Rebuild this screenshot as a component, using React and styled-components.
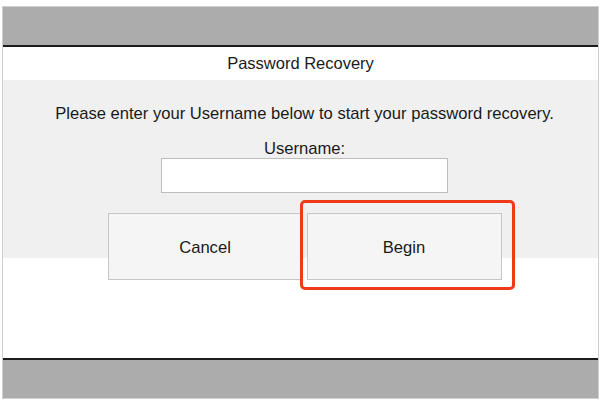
import React from "react";
import styled, { createGlobalStyle } from "styled-components";

const GlobalStyle = createGlobalStyle`
  html, body {
    margin: 0;
    padding: 0;
    background: #ffffff;
    font-family: "Liberation Sans", Arial, sans-serif;
    color: #1a1a1a;
  }
`;

const Frame = styled.div`
  margin: 6px 0 0 2px;
  width: 595px;
  border: 1px solid #cfcfcf;
  display: flex;
  flex-direction: column;
`;

const Bar = styled.div`
  height: 38px;
  background: #acacac;
  ${(p) =>
    p.$bottom ? "border-top: 2px solid #1c1c1c;" : "border-bottom: 2px solid #1c1c1c;"}
`;

const Content = styled.div`
  height: 311px;
  display: flex;
  flex-direction: column;
  background: #ffffff;
`;

const Title = styled.div`
  height: 33px;
  display: flex;
  align-items: center;
  justify-content: center;
  font-size: 16.5px;
`;

const Panel = styled.div`
  position: relative;
  background: linear-gradient(#f0f0f0 178px, #ffffff 178px);
  display: flex;
  flex-direction: column;
  align-items: center;
  padding: 24px 0 0 8px;
`;

const Message = styled.p`
  margin: 0;
  font-size: 16.6px;
  line-height: 20px;
  white-space: nowrap;
`;

const Label = styled.label`
  margin-top: 15px;
  font-size: 16.6px;
  line-height: 20px;
`;

const Input = styled.input`
  box-sizing: border-box;
  width: 287px;
  height: 35px;
  margin-top: -1px;
  border: 1px solid #bdbdbd;
  background: #ffffff;
  outline: none;
`;

const Actions = styled.div`
  position: relative;
  display: flex;
  gap: 4px;
  margin-top: 20px;
`;

const Button = styled.button`
  box-sizing: border-box;
  width: 195px;
  height: 67px;
  padding: 3px 0 0;
  border: 1px solid #c6c6c6;
  background: #f5f5f5;
  font-family: "Liberation Sans", Arial, sans-serif;
  font-size: 16.6px;
  color: #1a1a1a;
`;

const Highlight = styled.div`
  position: absolute;
  left: 192px;
  top: -13px;
  width: 215px;
  height: 90px;
  box-sizing: border-box;
  border: 3px solid #f03a17;
  border-radius: 5px;
  pointer-events: none;
`;

export default function App() {
  return (
    <>
      <GlobalStyle />
      <Frame>
        <Bar />
        <Content>
          <Title>Password Recovery</Title>
          <Panel>
            <Message>
              Please enter your Username below to start your password recovery.
            </Message>
            <Label htmlFor="username">Username:</Label>
            <Input id="username" type="text" />
            <Actions>
              <Button>Cancel</Button>
              <Button>Begin</Button>
              <Highlight />
            </Actions>
          </Panel>
        </Content>
        <Bar $bottom />
      </Frame>
    </>
  );
}
